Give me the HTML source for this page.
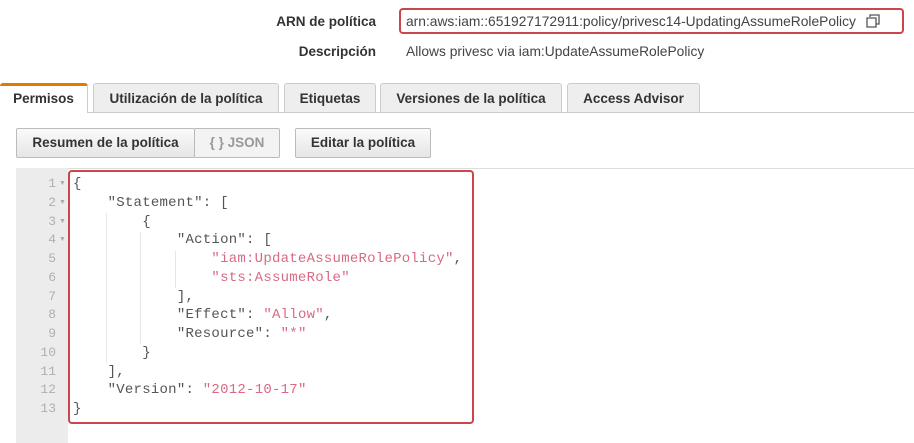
<!DOCTYPE html>
<html><head><meta charset="utf-8"><style>
body{margin:0;width:914px;height:443px;background:#fff;position:relative;overflow:hidden;font-family:"Liberation Sans",Arial,sans-serif;}
.a{position:absolute;white-space:nowrap}
.lbl{font-weight:bold;font-size:13.5px;color:#333;text-align:right}
.val{font-size:13.8px;color:#444}
.tab{position:absolute;top:83px;height:29px;background:#eee;border:1px solid #ccc;border-bottom:none;border-radius:3px 3px 0 0;box-sizing:border-box;font-weight:bold;font-size:13.5px;color:#333;text-align:center;line-height:29px}
.btn{position:absolute;top:128px;height:30px;box-sizing:border-box;border:1px solid #bbb;background:linear-gradient(#fafafa,#e6e6e6);font-weight:bold;font-size:13.5px;color:#333;text-align:center;line-height:28px;border-radius:2px}
.code{position:absolute;left:73px;top:175px;font-family:"Liberation Mono",monospace;font-size:14px;letter-spacing:0.25px;line-height:18.75px;color:#555;white-space:pre}
.s{color:#d86a84}
.ln{position:absolute;left:16px;top:175px;width:40px;font-family:"Liberation Mono",monospace;font-size:13px;line-height:18.75px;color:#b0b0b0;text-align:right;white-space:pre}
.ar{position:absolute;left:59px;font-size:7px;color:#aaa}
.g{position:absolute;width:1px;background:#e6e6e6}
</style></head><body>
<div class="a lbl" style="right:538px;top:14px">ARN de política</div>
<div class="a" style="left:399px;top:8px;width:505px;height:26px;border:2px solid #c9464d;border-radius:4px;box-sizing:border-box"></div>
<div class="a val" style="left:406px;top:14px">arn:aws:iam::651927172911:policy/privesc14-UpdatingAssumeRolePolicy</div>
<svg class="a" style="left:865px;top:13px" width="16" height="16" viewBox="0 0 16 16"><path d="M5 4V2h9v9h-3M2 5h9v9H2z" fill="none" stroke="#555" stroke-width="1.3"/></svg>
<div class="a lbl" style="right:538px;top:44px">Descripción</div>
<div class="a val" style="left:406px;top:44px">Allows privesc via iam:UpdateAssumeRolePolicy</div>

<div class="a" style="left:0;top:112px;width:914px;height:1px;background:#ccc"></div>
<div class="tab" style="left:0;width:88px;height:30px;background:#fff;border-top:3px solid #e07b00;line-height:26px;border-left:none">Permisos</div>
<div class="tab" style="left:93px;width:186px">Utilización de la política</div>
<div class="tab" style="left:284px;width:92px">Etiquetas</div>
<div class="tab" style="left:380px;width:182px">Versiones de la política</div>
<div class="tab" style="left:567px;width:133px">Access Advisor</div>

<div class="btn" style="left:16px;width:179px">Resumen de la política</div>
<div class="btn" style="left:194px;width:86px;background:#f3f3f3;color:#999">{ } JSON</div>
<div class="btn" style="left:295px;width:136px">Editar la política</div>

<div class="a" style="left:16px;top:168px;width:898px;height:1px;background:#ddd"></div>
<div class="a" style="left:16px;top:168px;width:52px;height:275px;background:#ececec"></div>
<div class="ln">1
2
3
4
5
6
7
8
9
10
11
12
13</div>
<div class="ar" style="top:180px">▼</div><div class="ar" style="top:199px">▼</div><div class="ar" style="top:218px">▼</div><div class="ar" style="top:236px">▼</div>
<div class="g" style="left:106px;top:213px;height:150px"></div>
<div class="g" style="left:140px;top:232px;height:112px"></div>
<div class="g" style="left:175px;top:251px;height:37px"></div>
<div class="code">{
    "Statement": [
        {
            "Action": [
                <span class="s">"iam:UpdateAssumeRolePolicy"</span>,
                <span class="s">"sts:AssumeRole"</span>
            ],
            "Effect": <span class="s">"Allow"</span>,
            "Resource": <span class="s">"*"</span>
        }
    ],
    "Version": <span class="s">"2012-10-17"</span>
}</div>
<div class="a" style="left:68px;top:170px;width:406px;height:254px;border:2px solid #c9464d;border-radius:4px;box-sizing:border-box"></div>
</body></html>
